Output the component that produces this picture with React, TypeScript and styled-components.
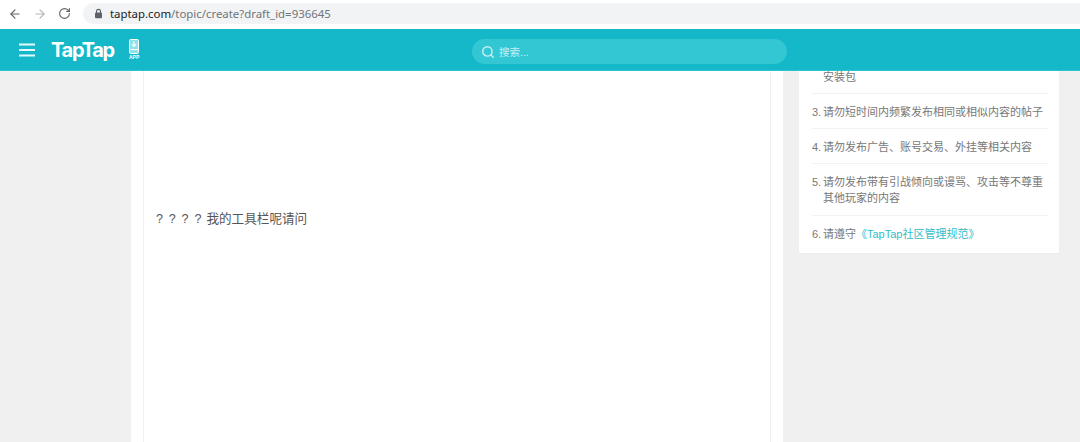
import React from "react";
import styled, { createGlobalStyle } from "styled-components";
import { ArrowLeft, ArrowRight, RotateCw, Search } from "lucide-react";

const GlobalStyle = createGlobalStyle`
  html, body {
    margin: 0;
    padding: 0;
    height: 100%;
    overflow: hidden;
    background: #f0f0f0;
    font-family: "Liberation Sans", "Noto Sans CJK SC", sans-serif;
  }
`;

const Page = styled.div`
  width: 1080px;
  height: 442px;
  display: flex;
  flex-direction: column;
  overflow: hidden;
`;

const BrowserBar = styled.div`
  height: 29px;
  flex: none;
  box-sizing: border-box;
  padding: 3px 0 5px 8px;
  display: flex;
  align-items: stretch;
  background: #fff;
`;

const NavButton = styled.div<{ $muted?: boolean }>`
  width: 25px;
  display: flex;
  align-items: center;
  justify-content: flex-start;
  color: ${p => (p.$muted ? "#b4b6b9" : "#5f6368")};
`;

const UrlPill = styled.div`
  flex: 1;
  padding-left: 11px;
  display: flex;
  align-items: center;
  gap: 7px;
  border-radius: 11px 0 0 11px;
  background: #f1f3f4;
  font-family: "Noto Sans", "Liberation Sans", sans-serif;
  font-size: 11.4px;
  color: #70757a;
`;

const UrlHost = styled.span`
  color: #202124;
`;

const Header = styled.header`
  height: 42px;
  flex: none;
  box-sizing: border-box;
  display: flex;
  align-items: center;
  position: relative;
  background: #14b8c8;
  border-bottom: 1px solid #2cc3d0;
`;

const MenuIcon = styled.svg`
  width: 16px;
  height: 14px;
  margin-left: 19px;
  color: #e6f9fb;
`;

const Logo = styled.div`
  margin-left: 16px;
  width: 63px;
  font-family: Inter, "Liberation Sans", sans-serif;
  font-size: 20px;
  font-weight: 700;
  letter-spacing: -1.3px;
  color: #fff;
`;

const AppBadge = styled.div`
  margin-left: 15px;
  display: flex;
  flex-direction: column;
  align-items: center;
  color: #fff;
`;

const AppLabel = styled.span`
  font-size: 5px;
  line-height: 6px;
  font-weight: 700;
`;

const SearchBox = styled.div`
  position: absolute;
  left: 472px;
  top: 10px;
  width: 315px;
  height: 25px;
  box-sizing: border-box;
  padding-left: 9px;
  display: flex;
  align-items: center;
  gap: 4px;
  border-radius: 13px;
  background: #32c7d3;
  color: #c8f0f4;
  font-size: 10.5px;
`;

const Content = styled.div`
  flex: 1;
  min-height: 0;
  padding-left: 131px;
  display: flex;
  align-items: flex-start;
  gap: 16px;
  overflow: hidden;
`;

const Main = styled.main`
  width: 652px;
  height: 100%;
  box-sizing: border-box;
  padding: 0 12px;
  background: #fff;
`;

const Editor = styled.div`
  height: 100%;
  box-sizing: border-box;
  padding: 138px 12px 0;
  border-left: 1px solid #efefef;
  border-right: 1px solid #efefef;
  display: flex;
  gap: 5px;
  font-size: 12.6px;
  line-height: 20px;
  color: #555;
`;

const Marks = styled.span`
  word-spacing: 2.3px;
`;

const RulesCard = styled.aside`
  width: 260px;
  box-sizing: border-box;
  padding: 0 11px 0 13px;
  background: #fff;
  box-shadow: 0 1px 2px rgba(0, 0, 0, 0.03);
  overflow: hidden;
`;

const RulesList = styled.ol`
  margin: -2px 0 0;
  padding: 0;
  list-style: none;
`;

const Rule = styled.li<{ $clipped?: boolean; $wrapped?: boolean }>`
  display: flex;
  padding: ${p => (p.$clipped ? "0 0 8px" : p.$wrapped ? "10px 0 9px" : "10px 0 8px")};
  border-bottom: 1px solid #f2f2f2;
  font-size: 11px;
  line-height: 16px;
  color: #777;

  &:last-child {
    border-bottom: none;
    padding-bottom: 11px;
  }
`;

const RuleNumber = styled.span`
  flex: none;
  width: 11px;
`;

const RuleLink = styled.span`
  color: #2fbdc9;
`;

const rules: Array<{ number: string; text: React.ReactNode; clipped?: boolean; wrapped?: boolean }> = [
  { number: "", text: "安装包", clipped: true },
  { number: "3.", text: "请勿短时间内频繁发布相同或相似内容的帖子" },
  { number: "4.", text: "请勿发布广告、账号交易、外挂等相关内容" },
  { number: "5.", text: "请勿发布带有引战倾向或谩骂、攻击等不尊重其他玩家的内容", wrapped: true },
  { number: "6.", text: <>请遵守<RuleLink>《TapTap社区管理规范》</RuleLink></> },
];

const LockIcon = () => (
  <svg width="9" height="11" viewBox="0 0 9 11" fill="none">
    <path d="M2.5 5V3.4a2 2 0 0 1 4 0V5" stroke="#5f6368" strokeWidth="1.1" />
    <rect x="1" y="4.6" width="7" height="5.6" rx="1" fill="#5f6368" />
  </svg>
);

const PhoneDownloadIcon = () => (
  <svg width="10" height="15" viewBox="0 0 10 15" fill="none">
    <rect x="0.5" y="0.5" width="9" height="14" rx="1" stroke="#fff" fill="#8fe2ea" />
    <path d="M5 2.5v4.5M3 5.4 5 7.4l2-2" stroke="#fff" strokeWidth="1.2" />
    <path d="M1 10.5h8" stroke="#fff" strokeWidth="1" />
  </svg>
);

export default function App() {
  return (
    <Page>
      <GlobalStyle />
      <BrowserBar>
        <NavButton><ArrowLeft size={14} /></NavButton>
        <NavButton $muted><ArrowRight size={14} /></NavButton>
        <NavButton><RotateCw size={13} /></NavButton>
        <UrlPill>
          <LockIcon />
          <span><UrlHost>taptap.com</UrlHost>/topic/create?draft_id=936645</span>
        </UrlPill>
      </BrowserBar>
      <Header>
        <MenuIcon viewBox="0 0 16 14" fill="none">
          <path d="M0 1.5h16M0 7h16M0 12.5h16" stroke="currentColor" strokeWidth="1.8" />
        </MenuIcon>
        <Logo>TapTap</Logo>
        <AppBadge>
          <PhoneDownloadIcon />
          <AppLabel>APP</AppLabel>
        </AppBadge>
        <SearchBox>
          <Search size={14} strokeWidth={2.4} />
          <span>搜索...</span>
        </SearchBox>
      </Header>
      <Content>
        <Main>
          <Editor>
            <Marks>? ? ? ?</Marks>
            <span>我的工具栏呢请问</span>
          </Editor>
        </Main>
        <RulesCard>
          <RulesList>
            {rules.map((rule, index) => (
              <Rule key={index} $clipped={rule.clipped} $wrapped={rule.wrapped}>
                <RuleNumber>{rule.number}</RuleNumber>
                <span>{rule.text}</span>
              </Rule>
            ))}
          </RulesList>
        </RulesCard>
      </Content>
    </Page>
  );
}
